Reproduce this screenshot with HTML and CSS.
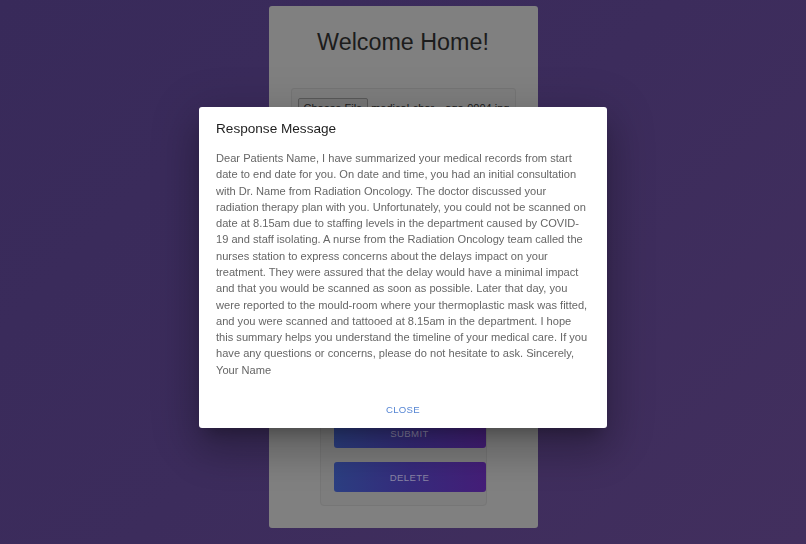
FILE: index.html
```html
<!DOCTYPE html>
<html lang="en">
<head>
<meta charset="utf-8">
<title>Welcome Home</title>
<link rel="stylesheet" href="styles.css">
</head>
<body>
<main class="card">
  <h1 class="card-title">Welcome Home!</h1>
  <div class="file-box">
    <span class="file-btn">Choose File</span>
    <span class="file-name">medical-char…age-0004.jpg</span>
  </div>
  <form class="form-box">
    <button type="button" class="grad-btn">Submit</button>
    <button type="button" class="grad-btn">Delete</button>
  </form>
</main>

<div class="backdrop">
  <section class="dialog" role="dialog">
    <h2 class="dialog-title">Response Message</h2>
    <p class="dialog-text">Dear Patients Name, I have summarized your medical records from start date to end date for you. On date and time, you had an initial consultation with Dr. Name from Radiation Oncology. The doctor discussed your radiation therapy plan with you. Unfortunately, you could not be scanned on date at 8.15am due to staffing levels in the department caused by COVID-19 and staff isolating. A nurse from the Radiation Oncology team called the nurses station to express concerns about the delays impact on your treatment. They were assured that the delay would have a minimal impact and that you would be scanned as soon as possible. Later that day, you were reported to the mould-room where your thermoplastic mask was fitted, and you were scanned and tattooed at 8.15am in the department. I hope this summary helps you understand the timeline of your medical care. If you have any questions or concerns, please do not hesitate to ask. Sincerely, Your Name</p>
    <div class="dialog-actions">
      <button type="button" class="text-btn">Close</button>
    </div>
  </section>
</div>
</body>
</html>
```

FILE: styles.css
```css
* { box-sizing: border-box; }

html, body { height: 100%; }

body {
  margin: 0;
  font-family: "Liberation Sans", Arial, sans-serif;
  background: linear-gradient(135deg, #382a5a 0%, #3c2c5c 50%, #422f5e 100%);
  overflow: hidden;
}

.card {
  width: 269px;
  height: 522px;
  margin: 6px auto 0;
  background: #808080;
  border-radius: 3px;
  padding: 22px 0 22px;
  display: flex;
  flex-direction: column;
  align-items: center;
}

.card-title {
  margin: 0;
  font-size: 23.3px;
  line-height: 28px;
  font-weight: normal;
  color: #1c1c1c;
}

.file-box {
  margin-top: 32px;
  width: 225px;
  padding: 9px 2px 10px 6px;
  border: 1px solid #767676;
  border-radius: 3px;
  background: #7e7e7e;
  display: flex;
  align-items: center;
  gap: 3px;
  font-size: 11px;
  color: #1c1c1c;
  white-space: nowrap;
}

.file-btn {
  border: 1px solid #5a5a5a;
  border-radius: 2px;
  background: #777;
  padding: 2px 5px;
  line-height: 14px;
}

.form-box {
  margin-top: 14px;
  width: 167px;
  flex: 1;
  border: 1px solid #767676;
  border-radius: 4px;
  background: #7d7d7d;
  padding: 0 0 13px 13px;
  display: flex;
  flex-direction: column;
  justify-content: flex-end;
  gap: 14px;
}

.grad-btn {
  width: 152px;
  height: 30px;
  border: none;
  border-radius: 3px;
  background: linear-gradient(90deg, #2c3f82 0%, #362b7c 50%, #451e78 100%);
  color: #8a85a6;
  font-family: "Liberation Sans", Arial, sans-serif;
  font-size: 9.6px;
  letter-spacing: 0.35px;
  text-transform: uppercase;
  padding: 0;
}

.backdrop {
  position: fixed;
  inset: 0;
  display: flex;
  align-items: center;
  justify-content: center;
}

.dialog {
  width: 408px;
  margin-bottom: 9px;
  background: #fff;
  border-radius: 3px;
  box-shadow: 0 11px 15px -7px rgba(0,0,0,0.25), 0 24px 38px 3px rgba(0,0,0,0.16), 0 9px 46px 8px rgba(0,0,0,0.14);
}

.dialog-title {
  margin: 0;
  padding: 11.7px 17px 0;
  font-size: 13.6px;
  line-height: 21.6px;
  font-weight: normal;
  color: #1e1e1e;
}

.dialog-text {
  margin: 0;
  padding: 10px 17px 15px;
  font-size: 11.1px;
  line-height: 16.3px;
  color: #666;
}

.dialog-actions {
  display: flex;
  justify-content: center;
  padding: 5.4px;
}

.text-btn {
  border: none;
  background: none;
  padding: 4px 8px;
  font-family: "Liberation Sans", Arial, sans-serif;
  font-size: 9.6px;
  line-height: 16.5px;
  letter-spacing: 0.27px;
  text-transform: uppercase;
  color: #5686d4;
}
```
